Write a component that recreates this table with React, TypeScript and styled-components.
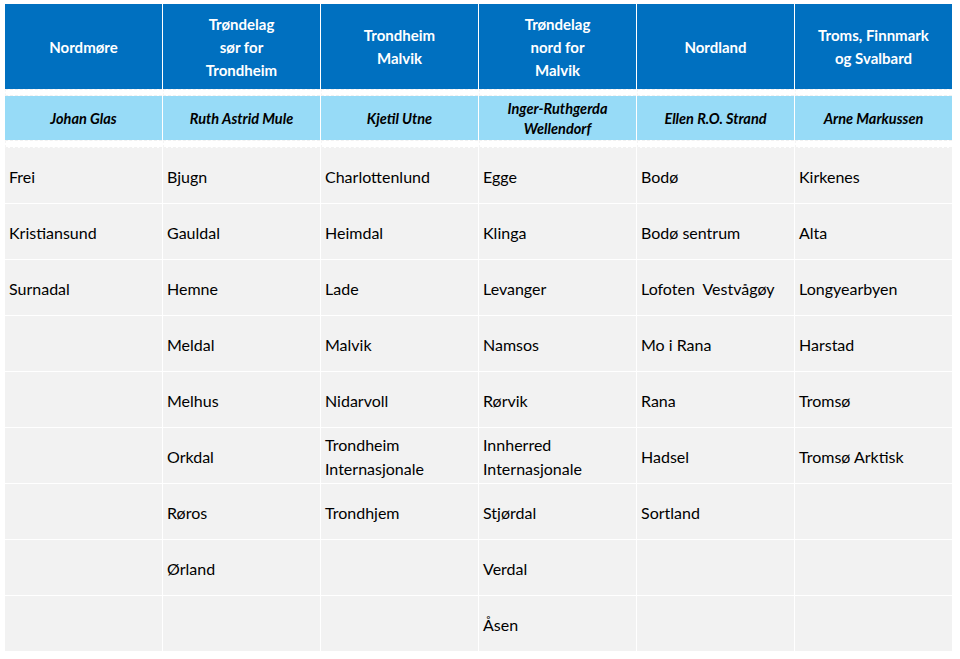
import styled, { createGlobalStyle } from 'styled-components';

const GlobalStyle = createGlobalStyle`
  html, body {
    margin: 0;
    padding: 0;
    background: #fff;
  }
  body {
    font-family: Lato, 'Liberation Sans', sans-serif;
    color: #000;
  }
`;

const regions = [
  { title: ['Nordmøre'], leader: ['Johan Glas'] },
  { title: ['Trøndelag', 'sør for', 'Trondheim'], leader: ['Ruth Astrid Mule'] },
  { title: ['Trondheim', 'Malvik'], leader: ['Kjetil Utne'] },
  { title: ['Trøndelag', 'nord for', 'Malvik'], leader: ['Inger-Ruthgerda', 'Wellendorf'] },
  { title: ['Nordland'], leader: ['Ellen R.O. Strand'] },
  { title: ['Troms, Finnmark', 'og Svalbard'], leader: ['Arne Markussen'] },
];

const columns: string[][][] = [
  [['Frei'], ['Kristiansund'], ['Surnadal']],
  [['Bjugn'], ['Gauldal'], ['Hemne'], ['Meldal'], ['Melhus'], ['Orkdal'], ['Røros'], ['Ørland']],
  [['Charlottenlund'], ['Heimdal'], ['Lade'], ['Malvik'], ['Nidarvoll'], ['Trondheim', 'Internasjonale'], ['Trondhjem']],
  [['Egge'], ['Klinga'], ['Levanger'], ['Namsos'], ['Rørvik'], ['Innherred', 'Internasjonale'], ['Stjørdal'], ['Verdal'], ['Åsen']],
  [['Bodø'], ['Bodø sentrum'], ['Lofoten  Vestvågøy'], ['Mo i Rana'], ['Rana'], ['Hadsel'], ['Sortland']],
  [['Kirkenes'], ['Alta'], ['Longyearbyen'], ['Harstad'], ['Tromsø'], ['Tromsø Arktisk']],
];

const ROWS = 9;

function Lines({ lines }: { lines: string[] }) {
  return (
    <Text>
      {lines.map((l, i) => (
        <Line key={i}>{l}</Line>
      ))}
    </Text>
  );
}

export default function App() {
  return (
    <>
      <GlobalStyle />
      <Page>
        <Section>
          {regions.map((r, i) => (
            <HeadCell key={i}>
              <Lines lines={r.title} />
            </HeadCell>
          ))}
        </Section>
        <Section>
          {regions.map((_, i) => (
            <Spacer key={i} $h={7} />
          ))}
        </Section>
        <Section>
          {regions.map((r, i) => (
            <LeaderCell key={i}>
              <Lines lines={r.leader} />
            </LeaderCell>
          ))}
        </Section>
        <Section>
          {regions.map((_, i) => (
            <Spacer key={i} $h={8} />
          ))}
        </Section>
        <Body>
          {Array.from({ length: ROWS }).map((_, row) =>
            columns.map((col, c) => (
              <BodyCell key={`${row}-${c}`}>{col[row] ? <Lines lines={col[row]} /> : null}</BodyCell>
            ))
          )}
        </Body>
      </Page>
    </>
  );
}

const Page = styled.div`
  padding: 4px 0 0 5px;
  width: 948px;
`;

const Section = styled.div`
  display: grid;
  grid-template-columns: repeat(6, 157px);
  column-gap: 1px;
`;

const Text = styled.div``;

const Line = styled.div`
  white-space: pre;
`;

const HeadCell = styled.div`
  height: 85px;
  background: #0070c0;
  color: #fff;
  font-weight: 700;
  font-size: 15px;
  line-height: 23px;
  padding-top: 1px;
  box-sizing: border-box;
  display: flex;
  align-items: center;
  justify-content: center;
  text-align: center;
`;

const Spacer = styled.div<{ $h: number }>`
  height: ${(p) => p.$h}px;
  box-sizing: border-box;
  border-top: 1px dashed #f1f1f1;
  border-bottom: 1px dashed #f1f1f1;
  border-left: 1px dashed #f4f4f4;
`;

const LeaderCell = styled.div`
  height: 44px;
  background: #97dbf7;
  font-weight: 700;
  font-style: italic;
  font-size: 14.5px;
  line-height: 20px;
  padding-top: 1px;
  box-sizing: border-box;
  display: flex;
  align-items: center;
  justify-content: center;
  text-align: center;
`;

const Body = styled.div`
  display: grid;
  grid-template-columns: repeat(6, 157px);
  grid-auto-rows: 55px;
  gap: 1px;
`;

const BodyCell = styled.div`
  background: #f2f2f2;
  font-size: 16px;
  line-height: 24px;
  padding: 2px 4px 0;
  display: flex;
  align-items: center;
`;
